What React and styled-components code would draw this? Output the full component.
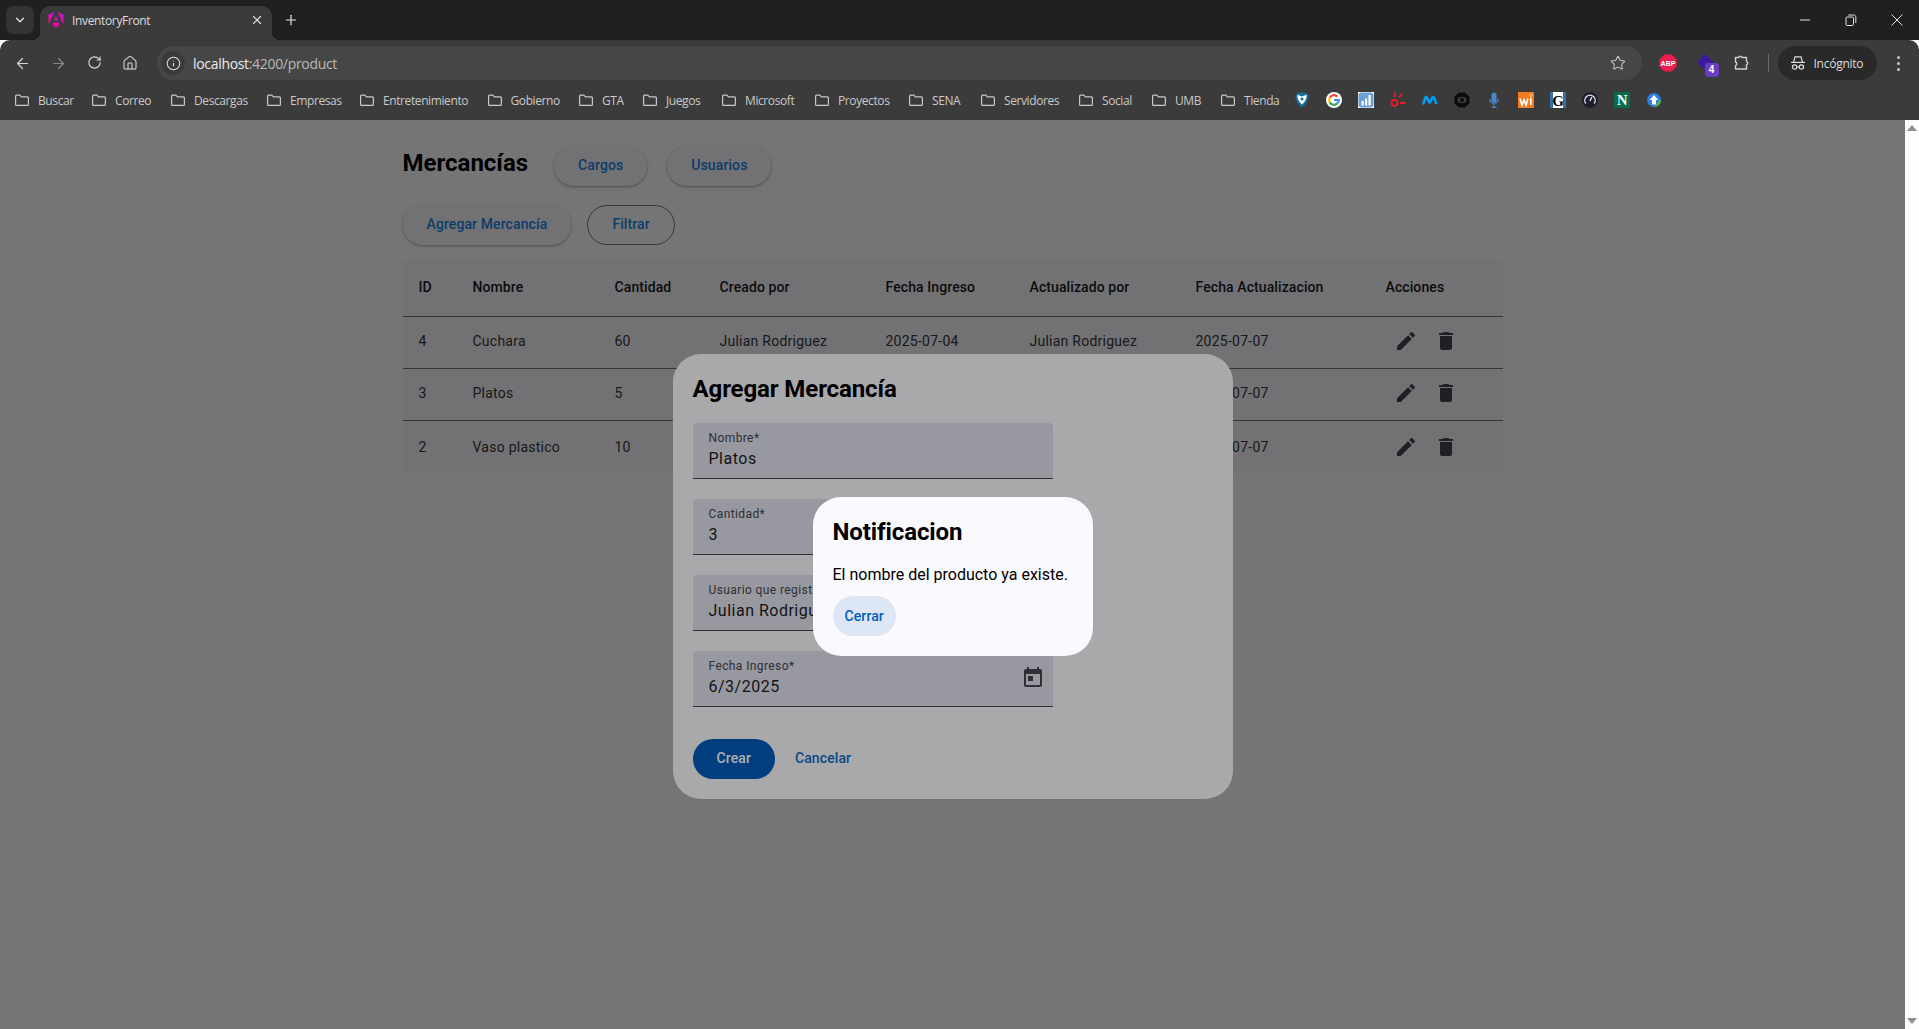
import React from 'react';
import styled, { createGlobalStyle } from 'styled-components';
import { ArrowLeft, ArrowRight, RotateCw, House, Star, Info, X, Plus, ChevronDown } from 'lucide-react';

const Global = createGlobalStyle`
  html, body { margin: 0; height: 100%; overflow: hidden; }
  #root { height: 100%; }
  * { box-sizing: border-box; }
`;

const Shell = styled.div`
  display: flex;
  flex-direction: column;
  height: 100vh;
  font-family: Roboto, "Liberation Sans", sans-serif;
`;

/* browser chrome */
const TabStrip = styled.div`
  display: flex;
  align-items: flex-end;
  height: 40px;
  flex: none;
  background: #1f2120;
  color: #e3e3e3;
  padding-left: 6px;
`;

const TabSearch = styled.div`
  width: 28px;
  height: 28px;
  margin-bottom: 6px;
  border-radius: 8px;
  background: #333534;
  display: flex;
  align-items: center;
  justify-content: center;
`;

const Tab = styled.div`
  position: relative;
  width: 232px;
  height: 34px;
  margin-left: 6px;
  padding: 0 8px 6px 8px;
  background: #3b3b3b;
  border-radius: 10px 10px 0 0;
  display: flex;
  align-items: center;
  gap: 8px;
  font: 12px "Open Sans", sans-serif;
  letter-spacing: -0.35px;

  &::before, &::after {
    content: '';
    position: absolute;
    bottom: 0;
    width: 8px;
    height: 8px;
  }
  &::before {
    left: -8px;
    background: radial-gradient(circle at 0 0, transparent 8px, #3b3b3b 8.5px);
  }
  &::after {
    right: -8px;
    background: radial-gradient(circle at 100% 0, transparent 8px, #3b3b3b 8.5px);
  }
`;

const TabTitle = styled.span`
  flex: 1;
  color: #dcdcdc;
`;

const NewTab = styled.div`
  margin: 0 0 12px 11px;
  display: flex;
`;

const WindowButtons = styled.div`
  margin-left: auto;
  align-self: stretch;
  display: flex;
  align-items: center;
  padding-right: 15px;
  gap: 33.5px;
`;

const Toolbar = styled.div`
  height: 40px;
  flex: none;
  background: #3b3b3b;
  border-radius: 10px 10px 0 0;
  padding-top: 6px;
  display: flex;
  align-items: center;
`;

const NavIcon = styled.div`
  width: 36px;
  display: flex;
  justify-content: center;
  color: ${p => (p.$off ? '#8a8a8a' : '#d6d6d6')};
`;

const NavGroup = styled.div`
  display: flex;
  padding-left: 4px;
  margin-right: 9px;
`;

const Omnibox = styled.div`
  width: 1485px;
  height: 34px;
  border-radius: 17px;
  background: #464646;
  display: flex;
  align-items: center;
  padding: 0 16px 0 4px;
  font: 14px "Open Sans", sans-serif;
  letter-spacing: -0.32px;
`;

const SiteChip = styled.div`
  width: 24px;
  height: 24px;
  border-radius: 50%;
  background: #3a3a3a;
  display: flex;
  align-items: center;
  justify-content: center;
  color: #dedede;
  margin-right: 8px;
`;

const Host = styled.span`
  color: #ececec;
`;

const UrlRest = styled.span`
  color: #b9b9b9;
`;

const StarSlot = styled.div`
  margin-left: auto;
  display: flex;
  color: #c4c4c4;
`;

const ExtArea = styled.div`
  display: flex;
  align-items: center;
  margin-left: 8px;
  flex: 1;
`;

const ExtSlot = styled.div`
  width: 36.5px;
  display: flex;
  justify-content: center;
  position: relative;
`;

const Badge = styled.span`
  position: absolute;
  left: 18px;
  top: 9px;
  width: 14px;
  height: 14px;
  border-radius: 3px;
  background: #6a3cc0;
  color: #fff;
  font: bold 10px/14px "Liberation Sans", sans-serif;
  text-align: center;
`;

const Divider = styled.div`
  width: 1px;
  height: 18px;
  background: #6a6a6a;
  margin: 0 9px 0 8px;
`;

const IncognitoPill = styled.div`
  width: 99px;
  height: 34px;
  border-radius: 17px;
  background: #292929;
  color: #dcdcdc;
  display: flex;
  align-items: center;
  gap: 8px;
  padding-left: 12px;
  font: 12px "Open Sans", sans-serif;
  letter-spacing: -0.25px;
`;

const Kebab = styled.div`
  margin-left: 20.5px;
  display: flex;
  flex-direction: column;
  gap: 3px;
  i {
    display: block;
    width: 3px;
    height: 3px;
    border-radius: 50%;
    background: #c8c8c8;
  }
`;

const BookmarkBar = styled.div`
  height: 40px;
  flex: none;
  background: #3b3b3b;
  display: flex;
  align-items: center;
  padding-left: 14px;
  font: 12px "Open Sans", sans-serif;
  letter-spacing: -0.4px;
  color: #c9c9c9;
`;

const Bookmark = styled.div`
  width: ${p => p.$w}px;
  flex: none;
  display: flex;
  align-items: center;
  gap: 8px;
`;

const Favicons = styled.div`
  display: flex;
  gap: 16px;
  margin-left: -4px;
`;

/* viewport */
const Viewport = styled.div`
  flex: 1;
  min-height: 0;
  display: flex;
`;

const PageArea = styled.div`
  flex: 1;
  position: relative;
  background: #fff;
  overflow: hidden;
`;

const Scrollbar = styled.div`
  width: 14px;
  flex: none;
  background: #fdfdfd;
  display: flex;
  flex-direction: column;
  justify-content: space-between;
  align-items: center;
  padding: 5px 0;
`;

const Arrow = styled.div`
  width: 0;
  height: 0;
  border-left: 5px solid transparent;
  border-right: 5px solid transparent;
  ${p => (p.$down ? 'border-top: 6px solid #8f8f8f;' : 'border-bottom: 6px solid #8f8f8f;')}
`;

const Content = styled.div`
  width: 1100px;
  margin: 0 auto;
  padding-top: 26px;
  display: flex;
  flex-direction: column;
`;

const HeaderRow = styled.div`
  display: flex;
  align-items: center;
  gap: 20px;
  margin-bottom: 19px;
`;

const PageTitle = styled.h1`
  margin: -6px 6px 0 0;
  font-size: 24px;
  line-height: 32px;
  font-weight: 700;
  color: #000;
`;

const ActionRow = styled.div`
  display: flex;
  gap: 16px;
  margin-bottom: 15px;
`;

const PillButton = styled.button`
  height: 40px;
  padding: 0 ${p => p.$pad || 24}px 2px;
  border-radius: 20px;
  border: none;
  background: transparent;
  color: ${p => p.$ink || '#1a86e8'};
  font: 500 14px Roboto, sans-serif;
  letter-spacing: 0.1px;
  flex: none;
`;

const ElevatedButton = styled(PillButton)`
  background: #faf9fd;
  box-shadow: 0 1px 3px 1px rgba(0, 0, 0, 0.1), 0 1px 2px rgba(0, 0, 0, 0.22);
`;

const OutlinedButton = styled(PillButton)`
  border: 1px solid #74777f;
`;

const FilledButton = styled(PillButton)`
  background: #005cbb;
  color: #fff;
`;

const TonalButton = styled(PillButton)`
  background: #dde6f4;
  color: #005cbb;
  padding-bottom: 0;
`;

const Table = styled.table`
  width: 1100px;
  table-layout: fixed;
  border-collapse: separate;
  border-spacing: 0;
  background: #faf9fd;
  color: #1a1b1f;
  font-size: 14px;
  letter-spacing: 0.25px;
`;

const Th = styled.th`
  width: ${p => p.$w}px;
  height: 57px;
  padding: 0 16px 2px;
  text-align: left;
  font-weight: 500;
  letter-spacing: 0.1px;
  border-bottom: 1px solid #74777f;
`;

const Td = styled.td`
  height: 52px;
  padding: 0 16px ${p => (p.$last ? 1 : 3)}px;
  color: #36373c;
  border-bottom: ${p => (p.$last ? 'none' : '1px solid #74777f')};
`;

const IconCell = styled.div`
  display: flex;
  color: #44474e;
`;

const IconButton = styled.div`
  width: 40px;
  height: 40px;
  display: flex;
  align-items: center;
  justify-content: center;
`;

/* dialogs */
const Backdrop = styled.div`
  position: absolute;
  inset: 0;
  padding-top: 3px;
  background: rgba(0, 0, 0, 0.32);
  display: flex;
  align-items: center;
  justify-content: center;
`;

const Dialog = styled.div`
  width: ${p => p.$w}px;
  padding: 20px;
  border-radius: 28px;
  background: #faf9fd;
`;

const DialogTitle = styled.h2`
  margin: 0 0 ${p => p.$gap}px;
  font-size: 24px;
  line-height: 30px;
  font-weight: 700;
  letter-spacing: -0.1px;
  color: #000;
`;

const FieldStack = styled.div`
  width: 360px;
  display: flex;
  flex-direction: column;
  gap: 20px;
`;

const Field = styled.div`
  height: 56px;
  padding: 7px 8px 0 16px;
  background: #e0e2ec;
  border-radius: 4px 4px 0 0;
  border-bottom: 1px solid #44474e;
  display: flex;
`;

const FieldText = styled.div`
  flex: 1;
  display: flex;
  flex-direction: column;
  gap: 1px;
`;

const FieldLabel = styled.label`
  font-size: 12px;
  line-height: 16px;
  letter-spacing: 0.4px;
  color: #44474e;
`;

const FieldValue = styled.div`
  font-size: 16px;
  line-height: 24px;
  letter-spacing: 0.5px;
  color: #1a1b1f;
`;

const CalendarSlot = styled.div`
  color: #44474e;
  padding-top: 8px;
  display: flex;
`;

const DialogActions = styled.div`
  display: flex;
  gap: 8px;
  margin-top: 32px;
`;

const Message = styled.p`
  margin: 0 0 9px;
  font-size: 16px;
  line-height: 24px;
  color: #000;
`;

const M = ({ d, size = 24 }) => (
  <svg width={size} height={size} viewBox="0 0 24 24" fill="currentColor"><path d={d} /></svg>
);

const EDIT = 'M3 17.25V21h3.75L17.81 9.94l-3.75-3.75L3 17.25zM20.71 7.04c.39-.39.39-1.02 0-1.41l-2.34-2.34c-.39-.39-1.02-.39-1.41 0l-1.83 1.83 3.75 3.75 1.83-1.83z';
const TRASH = 'M6 19c0 1.1.9 2 2 2h8c1.1 0 2-.9 2-2V7H6v12zM19 4h-3.5l-1-1h-5l-1 1H5v2h14V4z';
const TODAY = 'M19 3h-1V1h-2v2H8V1H6v2H5c-1.11 0-1.99.9-1.99 2L3 19c0 1.1.89 2 2 2h14c1.1 0 2-.9 2-2V5c0-1.1-.9-2-2-2zm0 16H5V8h14v11zM7 10h5v5H7z';

const Folder = () => (
  <svg width="16" height="16" viewBox="0 0 16 16" fill="none" stroke="#c9c9c9" strokeWidth="1.2">
    <path d="M1.6 4.2c0-.6.4-1 1-1h3.3l1.5 1.6h6c.6 0 1 .4 1 1v6.6c0 .6-.4 1-1 1H2.6c-.6 0-1-.4-1-1z" />
  </svg>
);

const AngularLogo = () => (
  <svg width="16" height="16" viewBox="0 0 16 16">
    <defs>
      <linearGradient id="ng" x1="0" y1="1" x2="1" y2="0">
        <stop offset="0" stopColor="#f0066f" />
        <stop offset="0.5" stopColor="#e40bb0" />
        <stop offset="1" stopColor="#7c2ee8" />
      </linearGradient>
    </defs>
    <path fill="url(#ng)" d="M9.5 0 15.2 12.2 15.8 2.8z" />
    <path fill="url(#ng)" d="M6.5 0 .2 2.8.8 12.2z" />
    <path fill="url(#ng)" d="M8 3.8 6 8.6h4zM5.2 10.4 4.3 12.7 8 15.9l3.7-3.2-.9-2.3z" />
  </svg>
);

const RestoreIcon = () => (
  <svg width="12" height="12" viewBox="0 0 12 12" fill="none" stroke="#e3e3e3" strokeWidth="1">
    <rect x="1" y="3" width="7.5" height="8.5" rx="1.2" />
    <path d="M3.2 1h5.6c1.2 0 2 .8 2 2v6" />
  </svg>
);

const IncognitoIcon = () => (
  <svg width="16" height="16" viewBox="0 0 16 16" fill="none" stroke="#dcdcdc" strokeWidth="1.2">
    <path d="M3.6 7 5 1.8h6L12.4 7" />
    <path d="M1 7.4h14" />
    <circle cx="4.6" cy="12" r="2.2" />
    <circle cx="11.4" cy="12" r="2.2" />
    <path d="M6.8 12h2.4" />
  </svg>
);

const PuzzleIcon = () => (
  <svg width="18" height="18" viewBox="0 0 18 18" fill="none" stroke="#d0d0d0" strokeWidth="1.4" strokeLinejoin="round">
    <path d="M3.5 3.5h3.2a1.8 1.8 0 0 1 3.4 0h4.4v3.8a1.8 1.8 0 0 1 0 3.4v4.3H3.5v-3.4a1.9 1.9 0 0 0 0-3.6z" />
  </svg>
);

const AbpIcon = () => (
  <svg width="18" height="18" viewBox="0 0 18 18">
    <path fill="#ef1c4f" d="M5.4 .5h7.2l5 5v7l-5 5H5.4l-5-5v-7z" />
    <text x="9" y="11.6" textAnchor="middle" fill="#fff" fontSize="7" fontWeight="700" fontFamily="Liberation Sans, sans-serif">ABP</text>
  </svg>
);

const DiamondIcon = () => (
  <svg width="18" height="18" viewBox="0 0 18 18">
    <path fill="#3a1a9c" d="M9 0l8 8-8 8-8-8z" />
  </svg>
);

const FAVICONS = [
  <svg key="a" width="16" height="16" viewBox="0 0 16 16">
    <path fill="#156f98" d="M8 .5c3 0 6 .8 6.500 3 .3 4.500-2.600 9.500-6.500 12C4.100 13 1.200 8 1.500 3.500 2 1.300 5 .5 8 .5z" />
    <path fill="#fff" d="M8 4.500 12.500 2.800c.5 3.700-1.800 7.700-4.500 9.700C5.300 10.500 3 6.500 3.500 2.800z" />
    <circle cx="8" cy="7" r="1.500" fill="#156f98" />
  </svg>,
  <svg key="g" width="16" height="16" viewBox="0 0 16 16" fill="none">
    <circle cx="8" cy="8" r="8" fill="#fff" />
    <path stroke="#ea4335" strokeWidth="2.2" d="M3.800 5.600A4.800 4.800 0 0 1 11.300 4.600" />
    <path stroke="#fbbc05" strokeWidth="2.2" d="M3.800 5.600a4.800 4.800 0 0 0 0 4.800" />
    <path stroke="#34a853" strokeWidth="2.2" d="M3.800 10.400a4.800 4.800 0 0 0 7.500 1" />
    <path stroke="#4285f4" strokeWidth="2.2" d="M11.300 11.400A4.800 4.800 0 0 0 12.800 8H8" />
  </svg>,
  <svg key="b" width="16" height="16" viewBox="0 0 16 16">
    <rect width="16" height="16" fill="#fff" />
    <rect x="0.500" y="0.500" width="15" height="15" rx="3" fill="#6a9fd8" />
    <rect x="3.500" y="9" width="2.200" height="4.500" fill="#fff" />
    <rect x="7" y="6.500" width="2.200" height="7" fill="#fff" />
    <rect x="10.500" y="3" width="2.200" height="10.500" fill="#fff" />
  </svg>,
  <svg key="r" width="16" height="16" viewBox="0 0 16 16" fill="none" stroke="#ee1c25" strokeWidth="1.800">
    <circle cx="4.500" cy="11" r="3" />
    <path d="M5 0.500V5M9 5.500 12.500 1.500M10 11h5.500" />
  </svg>,
  <svg key="m" width="16" height="16" viewBox="0 0 16 16" fill="none" stroke="#019df4" strokeWidth="2.600" strokeLinecap="round">
    <path d="M1.500 11.500C2.500 7 3.500 4.500 4.500 5c1.500.8 1.500 5.500 3 5.500S9.500 5.500 11 5c1.500-.3 2 3 3 6" />
  </svg>,
  <svg key="o" width="16" height="16" viewBox="0 0 16 16">
    <path fill="#0c0c0c" d="M5 .5h6l4.500 4v7L11 15.500H5L.5 11.500v-7z" />
    <ellipse cx="8" cy="8" rx="4.500" ry="3.200" fill="#3b3b3b" />
    <circle cx="8" cy="8" r="2" fill="#0c0c0c" />
  </svg>,
  <svg key="v" width="16" height="16" viewBox="0 0 16 16" fill="none">
    <rect x="5.500" y="0.500" width="5" height="10" rx="2.500" fill="#4a86c8" />
    <path stroke="#4a86c8" strokeWidth="1.200" d="M3.800 7c0 5.500 8.400 5.500 8.400 0M8 12v3M5.500 15.300h5" />
  </svg>,
  <svg key="w" width="16" height="16" viewBox="0 0 16 16">
    <rect width="16" height="16" fill="#f47b20" />
    <path fill="none" stroke="#fff" strokeWidth="1.600" d="M2 6.500 4 13l2-5 2 5 2-6.500" />
    <rect x="12" y="6" width="1.600" height="7" fill="#fff" />
    <circle cx="12.800" cy="3.500" r="1.200" fill="none" stroke="#fff" strokeWidth="0.700" />
  </svg>,
  <svg key="gg" width="16" height="16" viewBox="0 0 16 16">
    <rect width="16" height="16" fill="#3b6ea5" />
    <rect x="3" width="10" height="16" fill="#fff" />
    <text x="8" y="13.500" textAnchor="middle" fontSize="15" fontWeight="700" fontFamily="Liberation Serif, serif" fill="#000">G</text>
  </svg>,
  <svg key="s" width="16" height="16" viewBox="0 0 16 16" fill="none">
    <circle cx="8" cy="8" r="8" fill="#1d2033" />
    <path stroke="#e8e8e8" strokeWidth="1.300" d="M3.800 11.500a5.200 5.200 0 1 1 8.400 0M8 9l1.800-4" />
  </svg>,
  <svg key="n" width="16" height="16" viewBox="0 0 16 16">
    <rect width="16" height="16" fill="#0a6b4b" />
    <text x="8" y="13" textAnchor="middle" fontSize="14.500" fontWeight="700" fontFamily="Liberation Serif, serif" fill="#fff">N</text>
  </svg>,
  <svg key="u" width="16" height="16" viewBox="0 0 16 16">
    <circle cx="8" cy="8" r="7" fill="#2a7de1" />
    <path fill="#5fb04a" d="M8 15a7 7 0 0 0 7-7c-2 0-3 1-4 3s-2 4-3 4z" />
    <path fill="#fff" d="M8 3 12.500 8H10v4.500H6V8H3.500z" />
  </svg>,
];

const BOOKMARKS = [
  ['Buscar', 77], ['Correo', 79], ['Descargas', 96], ['Empresas', 93],
  ['Entretenimiento', 127.5], ['Gobierno', 91.5], ['GTA', 64], ['Juegos', 79],
  ['Microsoft', 93], ['Proyectos', 94], ['SENA', 72], ['Servidores', 98],
  ['Social', 73], ['UMB', 69], ['Tienda', 78],
];

const COLUMNS = [
  ['ID', 54], ['Nombre', 142], ['Cantidad', 105], ['Creado por', 166],
  ['Fecha Ingreso', 144], ['Actualizado por', 166], ['Fecha Actualizacion', 190], ['Acciones', 133],
];

const ROWS = [
  ['4', 'Cuchara', '60', 'Julian Rodriguez', '2025-07-04', 'Julian Rodriguez', '2025-07-07'],
  ['3', 'Platos', '5', 'Julian Rodriguez', '2025-07-04', 'Julian Rodriguez', '2025-07-07'],
  ['2', 'Vaso plastico', '10', 'Julian Rodriguez', '2025-07-04', 'Julian Rodriguez', '2025-07-07'],
];

const FIELDS = [
  ['Nombre*', 'Platos'],
  ['Cantidad*', '3'],
  ['Usuario que registra*', 'Julian Rodriguez'],
  ['Fecha Ingreso*', '6/3/2025', true],
];

export default function App() {
  return (
    <Shell>
      <Global />
      <TabStrip>
        <TabSearch><ChevronDown size={14} strokeWidth={2.4} /></TabSearch>
        <Tab>
          <AngularLogo />
          <TabTitle>InventoryFront</TabTitle>
          <X size={14} strokeWidth={2} />
        </Tab>
        <NewTab><Plus size={16} strokeWidth={1.8} /></NewTab>
        <WindowButtons>
          <svg width="12" height="12" viewBox="0 0 12 12"><path d="M1 6h10" stroke="#e3e3e3" /></svg>
          <RestoreIcon />
          <svg width="14" height="14" viewBox="0 0 14 14"><path d="M1.500 1.500l11 11M12.500 1.500l-11 11" stroke="#e3e3e3" /></svg>
        </WindowButtons>
      </TabStrip>

      <Toolbar>
        <NavGroup>
          <NavIcon><ArrowLeft size={17} strokeWidth={1.7} /></NavIcon>
          <NavIcon $off><ArrowRight size={17} strokeWidth={1.7} /></NavIcon>
          <NavIcon><RotateCw size={15} strokeWidth={1.8} /></NavIcon>
          <NavIcon><House size={16} strokeWidth={1.6} /></NavIcon>
        </NavGroup>
        <Omnibox>
          <SiteChip><Info size={15} strokeWidth={1.7} /></SiteChip>
          <span><Host>localhost</Host><UrlRest>:4200/product</UrlRest></span>
          <StarSlot><Star size={16} strokeWidth={1.6} /></StarSlot>
        </Omnibox>
        <ExtArea>
          <ExtSlot><AbpIcon /></ExtSlot>
          <ExtSlot><DiamondIcon /><Badge>4</Badge></ExtSlot>
          <ExtSlot><PuzzleIcon /></ExtSlot>
          <Divider />
          <IncognitoPill><IncognitoIcon />Incógnito</IncognitoPill>
          <Kebab><i /><i /><i /></Kebab>
        </ExtArea>
      </Toolbar>

      <BookmarkBar>
        {BOOKMARKS.map(([name, w]) => (
          <Bookmark key={name} $w={w}><Folder />{name}</Bookmark>
        ))}
        <Favicons>{FAVICONS}</Favicons>
      </BookmarkBar>

      <Viewport>
        <PageArea>
          <Content>
            <HeaderRow>
              <PageTitle>Mercancías</PageTitle>
              <ElevatedButton>Cargos</ElevatedButton>
              <ElevatedButton>Usuarios</ElevatedButton>
            </HeaderRow>
            <ActionRow>
              <ElevatedButton>Agregar Mercancía</ElevatedButton>
              <OutlinedButton>Filtrar</OutlinedButton>
            </ActionRow>
            <Table>
              <thead>
                <tr>
                  {COLUMNS.map(([name, w]) => <Th key={name} $w={w}>{name}</Th>)}
                </tr>
              </thead>
              <tbody>
                {ROWS.map((row, i) => (
                  <tr key={row[0]}>
                    {row.map((cell, j) => <Td key={j} $last={i === ROWS.length - 1}>{cell}</Td>)}
                    <Td $last={i === ROWS.length - 1}>
                      <IconCell>
                        <IconButton><M d={EDIT} /></IconButton>
                        <IconButton><M d={TRASH} /></IconButton>
                      </IconCell>
                    </Td>
                  </tr>
                ))}
              </tbody>
            </Table>
          </Content>

          <Backdrop>
            <Dialog $w={560}>
              <DialogTitle $gap={19}>Agregar Mercancía</DialogTitle>
              <FieldStack>
                {FIELDS.map(([label, value, date]) => (
                  <Field key={label}>
                    <FieldText>
                      <FieldLabel>{label}</FieldLabel>
                      <FieldValue>{value}</FieldValue>
                    </FieldText>
                    {date && <CalendarSlot><M d={TODAY} /></CalendarSlot>}
                  </Field>
                ))}
              </FieldStack>
              <DialogActions>
                <FilledButton>Crear</FilledButton>
                <PillButton $pad={12} $ink="#0f6cc8">Cancelar</PillButton>
              </DialogActions>
            </Dialog>
          </Backdrop>

          <Backdrop>
            <Dialog $w={280}>
              <DialogTitle $gap={16}>Notificacion</DialogTitle>
              <Message>El nombre del producto ya existe.</Message>
              <TonalButton $pad={12}>Cerrar</TonalButton>
            </Dialog>
          </Backdrop>
        </PageArea>
        <Scrollbar>
          <Arrow />
          <Arrow $down />
        </Scrollbar>
      </Viewport>
    </Shell>
  );
}
